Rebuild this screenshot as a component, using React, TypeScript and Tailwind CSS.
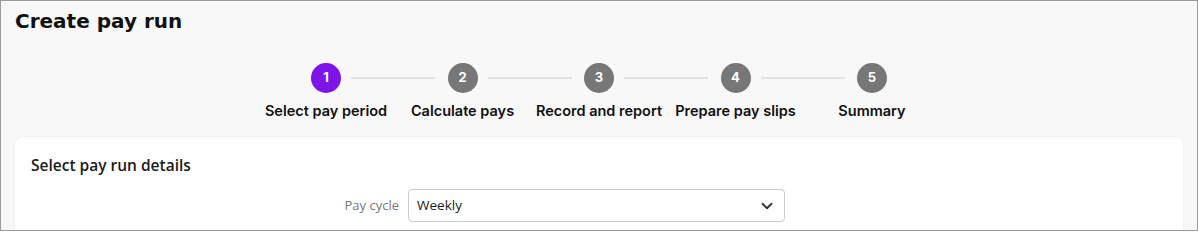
import { ChevronDown } from "lucide-react";

const steps = ["Select pay period", "Calculate pays", "Record and report", "Prepare pay slips", "Summary"];

export default function App() {
  return (
    <div className="w-[1198px] h-[231px] overflow-hidden border border-[#9b9b9b] bg-[#f8f8f8]">
      <h1
        className="pl-[14px] pt-[6px] text-[20px] font-bold leading-[28px] text-[#111]"
        style={{ fontFamily: "'DejaVu Sans', sans-serif" }}
      >
        Create pay run
      </h1>

      <div className="mt-[28px] flex justify-center" style={{ fontFamily: "Inter, sans-serif" }}>
        {steps.map((label, i) => (
          <div key={label} className="relative flex w-[136.5px] flex-col items-center">
            {i > 0 && (
              <div className="absolute left-[-43px] top-[14px] h-[2px] w-[84px] bg-[#e2e2e2]" />
            )}
            <div
              className={
                "flex h-[30px] w-[30px] items-center justify-center rounded-full text-[13px] font-bold text-white " +
                (i === 0 ? "bg-[#7d14ea]" : "bg-[#777777]")
              }
            >
              {i + 1}
            </div>
            <div className="mt-[8px] whitespace-nowrap text-[14.5px] font-semibold leading-[20px] text-[#111]">
              {label}
            </div>
          </div>
        ))}
      </div>

      <div
        className="mx-[14px] mt-[16px] h-[120px] rounded-[8px] bg-white px-[16px] pt-[18px] shadow-[0_0_3px_rgba(0,0,0,0.06)]"
        style={{ fontFamily: "'Open Sans', 'Noto Sans', sans-serif" }}
      >
        <h2 className="text-[15.5px] font-semibold leading-[20px] text-[#1a1a1a]">Select pay run details</h2>
        <div className="mt-[14px] flex items-center">
          <label className="w-[377px] pr-[9px] text-right text-[13px] text-[#777]">Pay cycle</label>
          <div className="flex h-[33px] w-[377px] items-center justify-between rounded-[4px] border border-[#cccccc] pl-[8px] pr-[8px]">
            <span className="text-[13.5px] text-[#1a1a1a]">Weekly</span>
            <ChevronDown size={18} strokeWidth={2.4} className="text-[#333]" />
          </div>
        </div>
        <div className="ml-[379px] mt-[9px] h-[20px] w-[375px] rounded-[4px] border border-[#cccccc]" />
      </div>
    </div>
  );
}
